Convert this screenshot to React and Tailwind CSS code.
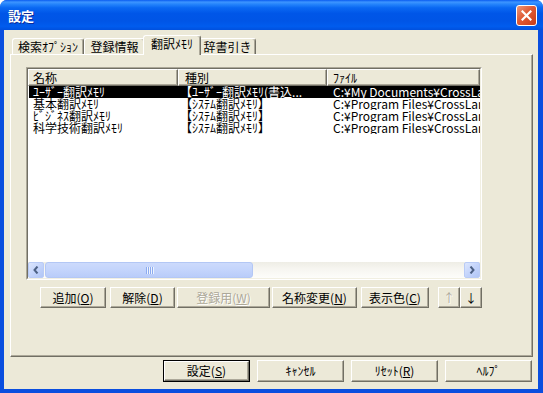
import React from "react";

const bevel =
  "border border-t-white border-l-white border-r-[#716F64] border-b-[#716F64] shadow-[inset_-1px_-1px_0_#ACA899]";

function Btn({ w, h, children, disabled, def }) {
  const txt = disabled
    ? "text-[#ACA899] [text-shadow:1px_1px_0_#ffffff]"
    : "text-black";
  const inner = (
    <div
      className={`${bevel} h-full w-full bg-[#ECE9D8] flex items-center justify-center text-[12px] leading-[12px] whitespace-nowrap ${txt}`}
    >
      {children}
    </div>
  );
  return (
    <div
      className={`shrink-0 ${def ? "border border-black" : ""}`}
      style={{ width: w, height: h }}
    >
      {inner}
    </div>
  );
}

const U = ({ children }) => (
  <span className="underline underline-offset-[1px]">{children}</span>
);

function Chevron({ dir }) {
  return (
    <svg width="8" height="8" viewBox="0 0 8 8">
      {dir === "left" ? (
        <polyline points="5.5,0.5 2.5,4 5.5,7.5" fill="none" stroke="#4D6185" strokeWidth="2" />
      ) : (
        <polyline points="2.5,0.5 5.5,4 2.5,7.5" fill="none" stroke="#4D6185" strokeWidth="2" />
      )}
    </svg>
  );
}

function SbBtn({ dir }) {
  return (
    <div className="w-[16px] h-[16px] shrink-0 rounded-[2px] border border-[#B9CBF6] bg-[linear-gradient(135deg,#DCE6FD_0%,#C4D4FB_50%,#B1C6F5_100%)] flex items-center justify-center">
      <Chevron dir={dir} />
    </div>
  );
}

const rows = [
  ["ﾕｰｻﾞｰ翻訳ﾒﾓﾘ", "【ﾕｰｻﾞｰ翻訳ﾒﾓﾘ(書込...", "C:¥My Documents¥CrossLanguage¥Memory"],
  ["基本翻訳ﾒﾓﾘ", "【ｼｽﾃﾑ翻訳ﾒﾓﾘ】", "C:¥Program Files¥CrossLanguage¥Memory"],
  ["ﾋﾞｼﾞﾈｽ翻訳ﾒﾓﾘ", "【ｼｽﾃﾑ翻訳ﾒﾓﾘ】", "C:¥Program Files¥CrossLanguage¥Memory"],
  ["科学技術翻訳ﾒﾓﾘ", "【ｼｽﾃﾑ翻訳ﾒﾓﾘ】", "C:¥Program Files¥CrossLanguage¥Memory"],
];

const hdr =
  "h-full bg-[#ECE9D8] border border-t-white border-l-white border-r-[#716F64] border-b-[#716F64] shadow-[inset_-1px_-1px_0_#ACA899] flex items-center text-[12px] leading-[12px] whitespace-nowrap overflow-hidden";

const tabBase =
  "border-l border-t border-r border-l-white border-t-white border-r-[#716F64] rounded-t-[3px] shadow-[inset_-1px_0_0_#ACA899] flex justify-center pt-[2px] text-[12px] leading-[12px] whitespace-nowrap shrink-0";

export default function App() {
  return (
    <div className="w-[543px] h-[393px] bg-white font-['Noto_Sans_CJK_JP',sans-serif] text-black overflow-hidden">
      <div className="w-full h-full flex flex-col bg-[#0A4EDF] rounded-t-[7px] overflow-hidden">
        {/* title bar */}
        <div className="h-[30px] shrink-0 flex items-center justify-between pl-[8px] pr-[6px] bg-[linear-gradient(to_bottom,#0A5CF0_0%,#3D95FF_7%,#2584FB_14%,#0A68F2_26%,#0056E8_45%,#0055E6_70%,#005CEE_88%,#0050DE_100%)]">
          <div className="text-white font-bold text-[13px] leading-[13px] [text-shadow:1px_1px_0_#0A2A9A] pt-[1px]">
            設定
          </div>
          <div className="w-[21px] h-[21px] rounded-[3px] border border-white bg-[linear-gradient(135deg,#EE9878_0%,#DF5A35_45%,#C83C18_100%)] flex items-center justify-center">
            <svg width="11" height="11" viewBox="0 0 11 11">
              <path d="M1.5 1.5 L9.5 9.5 M9.5 1.5 L1.5 9.5" stroke="#ffffff" strokeWidth="2.2" strokeLinecap="square" />
            </svg>
          </div>
        </div>

        {/* client */}
        <div className="flex-1 ml-[4px] mr-[5px] mb-[4px] bg-[#ECE9D8] flex flex-col">
          {/* tabs */}
          <div className="h-[25px] shrink-0 pt-[5px] pl-[8px] flex items-end">
            <div className={`${tabBase} w-[72px] h-[17px]`}>検索ｵﾌﾟｼｮﾝ</div>
            <div className={`${tabBase} w-[61px] h-[17px]`}>登録情報</div>
            <div className={`${tabBase} w-[58px] h-[20px] -mx-[2px] relative z-10 bg-[#ECE9D8]`}>翻訳ﾒﾓﾘ</div>
            <div className={`${tabBase} w-[57px] h-[17px]`}>辞書引き</div>
          </div>

          {/* panel */}
          <div className="-mt-[1px] ml-[6px] w-[523px] h-[303px] shrink-0 border border-t-white border-l-white border-r-[#716F64] border-b-[#716F64] shadow-[inset_-1px_-1px_0_#ACA899] flex flex-col">
            {/* list view */}
            <div className="mt-[12px] ml-[15px] w-[456px] h-[213px] border border-t-[#ACA899] border-l-[#ACA899] border-r-white border-b-white">
              <div className="w-full h-full border border-t-[#716F64] border-l-[#716F64] border-r-[#F1EFE2] border-b-[#F1EFE2] bg-white flex flex-col overflow-hidden">
                <div className="h-[17px] shrink-0 flex">
                  <div className={`${hdr} w-[150px] shrink-0 pl-[4px]`}>名称</div>
                  <div className={`${hdr} w-[149px] shrink-0 pl-[6px]`}>種別</div>
                  <div className={`${hdr} flex-1 pl-[5px]`}>ﾌｧｲﾙ</div>
                </div>
                {rows.map((r, i) => (
                  <div
                    key={i}
                    className={`h-[12px] shrink-0 flex text-[12px] leading-[12px] whitespace-nowrap ${
                      i === 0 ? "bg-black text-white ml-[1px]" : ""
                    }`}
                  >
                    <div className={`${i === 0 ? "w-[149px] pl-[4px]" : "w-[150px] pl-[5px]"} shrink-0 overflow-hidden`}>{r[0]}</div>
                    <div className="w-[149px] shrink-0 overflow-hidden pl-[2px]">{r[1]}</div>
                    <div className="flex-1 overflow-hidden pl-[6px]">{r[2]}</div>
                  </div>
                ))}
                <div className="flex-1" />
                {/* horizontal scrollbar */}
                <div className="h-[16px] shrink-0 flex bg-[linear-gradient(to_bottom,#EEEDE5_0%,#F6F5F0_40%,#FDFDFA_100%)]">
                  <SbBtn dir="left" />
                  <div className="flex-1 flex">
                    <div className="ml-[1px] w-[208px] h-full rounded-[3px] border border-[#B3C7F5] bg-[linear-gradient(to_bottom,#CCDAFC_0%,#C3D4FC_50%,#B9CCF9_100%)] flex items-center justify-center gap-[1px]">
                      {[0, 1, 2, 3].map((k) => (
                        <div key={k} className="w-[1px] h-[7px] bg-[#8CABF0] shadow-[1px_0_0_#EEF4FE]" />
                      ))}
                    </div>
                  </div>
                  <SbBtn dir="right" />
                </div>
              </div>
            </div>

            {/* button row */}
            <div className="mt-[7px] ml-[29px] flex h-[21px]">
              <Btn w={66} h={21}>追加(<U>O</U>)</Btn>
              <div className="w-[4px]" />
              <Btn w={65} h={21}>解除(<U>D</U>)</Btn>
              <div className="w-[2px]" />
              <Btn w={93} h={21} disabled>登録用(<U>W</U>)</Btn>
              <div className="w-[2px]" />
              <Btn w={85} h={21}>名称変更(<U>N</U>)</Btn>
              <div className="w-[4px]" />
              <Btn w={68} h={21}>表示色(<U>C</U>)</Btn>
              <div className="w-[9px]" />
              <Btn w={22} h={21} disabled>↑</Btn>
              <Btn w={22} h={21}>↓</Btn>
            </div>
          </div>

          {/* bottom buttons */}
          <div className="mt-[3px] ml-[159px] flex gap-[7px]">
            <Btn w={87} h={22} def>設定(<U>S</U>)</Btn>
            <Btn w={87} h={22}>ｷｬﾝｾﾙ</Btn>
            <Btn w={87} h={22}>ﾘｾｯﾄ(<U>R</U>)</Btn>
            <Btn w={87} h={22}>ﾍﾙﾌﾟ</Btn>
          </div>
        </div>
      </div>
    </div>
  );
}
